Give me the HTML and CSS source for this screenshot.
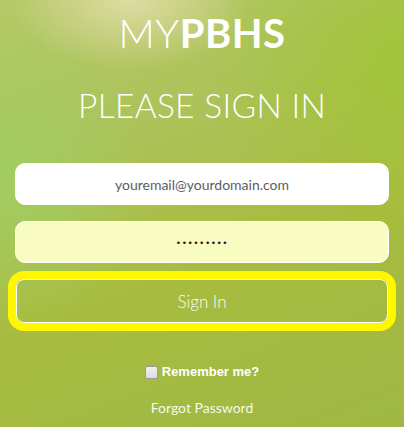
FILE: index.html
```html
<!DOCTYPE html>
<html>
<head>
<meta charset="utf-8">
<link rel="stylesheet" href="styles.css">
</head>
<body>
<div class="page">
  <h1 class="logo"><span class="thin">MY</span><span class="bold">PBHS</span></h1>
  <h2 class="title">PLEASE SIGN IN</h2>
  <form class="form">
    <div class="field email">youremail@yourdomain.com</div>
    <div class="field password">•••••••••</div>
    <div class="button">Sign In</div>
    <label class="remember"><span class="check"></span>Remember me?</label>
    <a class="forgot">Forgot Password</a>
  </form>
</div>
</body>
</html>
```
FILE: styles.css
```css
html, body {
  margin: 0;
  padding: 0;
}
body {
  width: 404px;
  height: 427px;
  overflow: hidden;
}
.page {
  width: 404px;
  height: 427px;
  box-sizing: border-box;
  padding-top: 9px;
  display: flex;
  flex-direction: column;
  align-items: center;
  color: #fff;
  font-family: Lato, "Open Sans", sans-serif;
  background:
    radial-gradient(ellipse 120px 70px at 130px 0px, rgba(226,222,170,0.9), rgba(226,222,170,0) 100%),
    radial-gradient(ellipse 140px 160px at 10px 170px, rgba(160,206,98,0.9), rgba(160,206,98,0) 100%),
    radial-gradient(ellipse 200px 160px at 404px 60px, rgba(160,196,50,0.8), rgba(160,196,50,0) 100%),
    linear-gradient(160deg, #b6c967 0%, #adc25a 30%, #a7bc3e 60%, #9fb845 100%);
}
.logo {
  margin: 0;
  font-size: 40px;
  line-height: 48px;
  font-weight: 300;
  letter-spacing: 0.5px;
}
.logo .thin { font-weight: 300; }
.logo .bold { font-weight: 700; }
.title {
  margin: 28px 0 0 0;
  font-size: 33.5px;
  line-height: 40px;
  font-weight: 300;
  letter-spacing: 0.3px;
}
.form {
  margin-top: 38px;
  display: flex;
  flex-direction: column;
  align-items: center;
  width: 404px;
}
.field {
  width: 374px;
  height: 42px;
  box-sizing: border-box;
  border-radius: 10px;
  display: flex;
  align-items: center;
  justify-content: center;
  font-size: 14px;
}
.email {
  background: #fff;
  color: #5c5c5c;
  border: 1px solid #fff;
}
.password {
  margin-top: 16px;
  background: #f8fcc0;
  border: 1px solid #fff;
  color: #222;
  font-family: "DejaVu Sans", sans-serif;
  font-size: 9px;
  letter-spacing: 0.5px;
  padding-top: 2px;
}
.button {
  margin-top: 16px;
  width: 372px;
  height: 44px;
  box-sizing: border-box;
  border: 1.5px solid #fff;
  border-radius: 8px;
  box-shadow: 0 0 0 8px #fff700;
  display: flex;
  align-items: center;
  justify-content: center;
  color: #fbfcf0;
  font-size: 17px;
  font-weight: 300;
}
.remember {
  margin-top: 41px;
  display: flex;
  align-items: center;
  font-family: "Liberation Sans", Arial, sans-serif;
  font-weight: 700;
  font-size: 13px;
  color: #fff;
}
.check {
  width: 11px;
  height: 11px;
  background: linear-gradient(#f0f0f0, #dcdcdc);
  border: 1px solid #9a9a9a;
  border-radius: 2px;
  margin-right: 4px;
  margin-top: 2px;
}
.forgot {
  margin-top: 20px;
  font-size: 14px;
  color: #f6f8ec;
}
```
